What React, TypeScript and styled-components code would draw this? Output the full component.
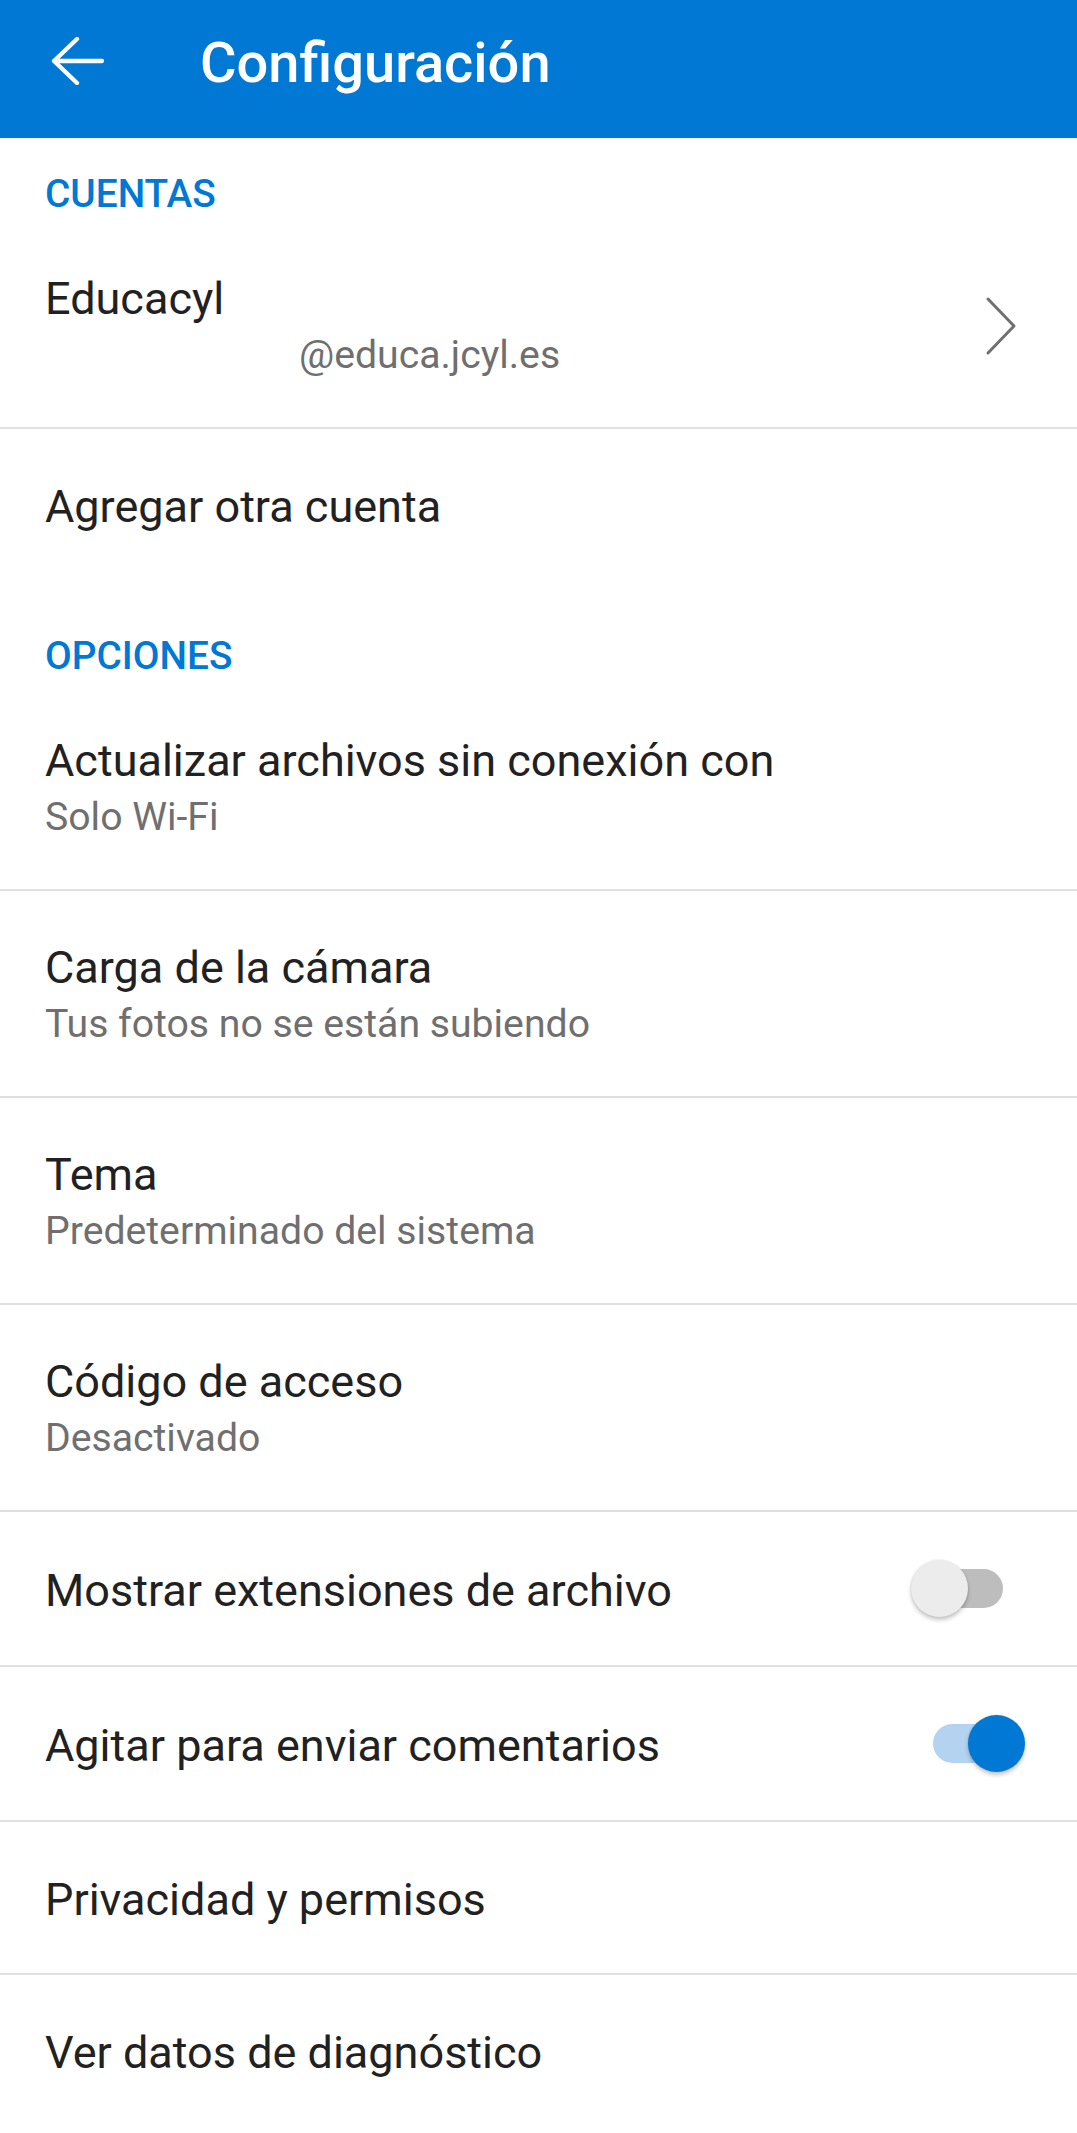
import React from "react";
import styled, { createGlobalStyle } from "styled-components";

const GlobalStyle = createGlobalStyle`
  html, body {
    margin: 0;
    padding: 0;
    background: #ffffff;
  }
  body {
    font-family: Roboto, "Noto Sans", "Liberation Sans", sans-serif;
    -webkit-font-smoothing: antialiased;
  }
`;

const Page = styled.div`
  width: 1077px;
  min-height: 2133px;
  background: #ffffff;
  overflow: hidden;
`;

const AppBar = styled.header`
  display: flex;
  align-items: center;
  height: 121px;
  padding: 0 0 17px 51px;
  background: #0078d4;
`;

const BackButton = styled.button`
  display: flex;
  align-items: center;
  justify-content: center;
  width: 54px;
  height: 48px;
  padding: 0;
  border: none;
  background: transparent;
  cursor: pointer;
`;

const Title = styled.h1`
  margin: 0 0 0 95px;
  padding-top: 5px;
  font-size: 56px;
  line-height: 64px;
  font-weight: 500;
  color: #ffffff;
`;

const SectionHeader = styled.div<{ $top: number }>`
  padding: ${(p) => p.$top}px 45px 2px;
  font-size: 38.8px;
  line-height: 52px;
  font-weight: 500;
  color: #0078d4;
`;

const Row = styled.div<{ $divider?: boolean }>`
  display: flex;
  align-items: center;
  padding: 47px 52px 45px 45px;
  border-bottom: ${(p) => (p.$divider ? "2px solid #e0e0e0" : "none")};
  cursor: pointer;
`;

const SingleRow = styled(Row)`
  padding: 48px 52px 43px 45px;
`;

const Texts = styled.div`
  display: flex;
  flex-direction: column;
  flex: 1;
  min-width: 0;
`;

const ItemTitle = styled.div`
  font-size: 45px;
  line-height: 60px;
  color: #212121;
  white-space: nowrap;
`;

const ItemSub = styled.div<{ $indent?: number }>`
  padding-left: ${(p) => p.$indent || 0}px;
  font-size: 39.2px;
  line-height: 53px;
  color: #6f6f6f;
  white-space: nowrap;
`;

const Chevron = styled.svg`
  margin-right: 8px;
  flex-shrink: 0;
`;

const Switch = styled.div`
  position: relative;
  width: 114px;
  height: 57px;
  margin-bottom: 5px;
  flex-shrink: 0;
`;

const Track = styled.div<{ $on: boolean }>`
  position: absolute;
  left: 22px;
  top: 9px;
  width: 70px;
  height: 39px;
  border-radius: 20px;
  background: ${(p) => (p.$on ? "#b3d3f1" : "#bdbdbd")};
`;

const Thumb = styled.div<{ $on: boolean }>`
  position: absolute;
  top: 0;
  left: ${(p) => (p.$on ? 57 : 0)}px;
  width: 57px;
  height: 57px;
  border-radius: 50%;
  background: ${(p) => (p.$on ? "#0078d4" : "#ececec")};
  box-shadow: 0 3px 4px rgba(0, 0, 0, 0.22), 0 0 2px rgba(0, 0, 0, 0.12);
`;

const options = [
  { title: "Actualizar archivos sin conexión con", sub: "Solo Wi-Fi" },
  { title: "Carga de la cámara", sub: "Tus fotos no se están subiendo" },
  { title: "Tema", sub: "Predeterminado del sistema" },
  { title: "Código de acceso", sub: "Desactivado" },
];

const toggles = [
  { title: "Mostrar extensiones de archivo", on: false },
  { title: "Agitar para enviar comentarios", on: true },
];

const links = ["Privacidad y permisos", "Ver datos de diagnóstico"];

const Toggle = ({ on }: { on: boolean }) => (
  <Switch role="switch" aria-checked={on}>
    <Track $on={on} />
    <Thumb $on={on} />
  </Switch>
);

export default function App() {
  return (
    <Page>
      <GlobalStyle />
      <AppBar>
        <BackButton aria-label="Atrás">
          <svg width="54" height="48" viewBox="0 0 54 48" fill="none">
            <path
              d="M3 24 H51 M26 2 L3 24 L26 46"
              stroke="#ffffff"
              strokeWidth="4.3"
              strokeLinecap="round"
              strokeLinejoin="round"
            />
          </svg>
        </BackButton>
        <Title>Configuración</Title>
      </AppBar>

      <SectionHeader $top={30}>CUENTAS</SectionHeader>
      <Row $divider>
        <Texts>
          <ItemTitle>Educacyl</ItemTitle>
          <ItemSub $indent={254}>@educa.jcyl.es</ItemSub>
        </Texts>
        <Chevron width="32" height="60" viewBox="0 0 32 60" fill="none">
          <path
            d="M3 3 L29 30 L3 57"
            stroke="#707070"
            strokeWidth="3"
            strokeLinecap="round"
            strokeLinejoin="round"
          />
        </Chevron>
      </Row>
      <SingleRow>
        <ItemTitle>Agregar otra cuenta</ItemTitle>
      </SingleRow>

      <SectionHeader $top={50}>OPCIONES</SectionHeader>
      {options.map((item, index) => (
        <Row $divider key={index}>
          <Texts>
            <ItemTitle>{item.title}</ItemTitle>
            <ItemSub>{item.sub}</ItemSub>
          </Texts>
        </Row>
      ))}
      {toggles.map((item, index) => (
        <SingleRow $divider key={index}>
          <Texts>
            <ItemTitle>{item.title}</ItemTitle>
          </Texts>
          <Toggle on={item.on} />
        </SingleRow>
      ))}
      {links.map((label, index) => (
        <SingleRow $divider={index < links.length - 1} key={label}>
          <ItemTitle>{label}</ItemTitle>
        </SingleRow>
      ))}
    </Page>
  );
}
